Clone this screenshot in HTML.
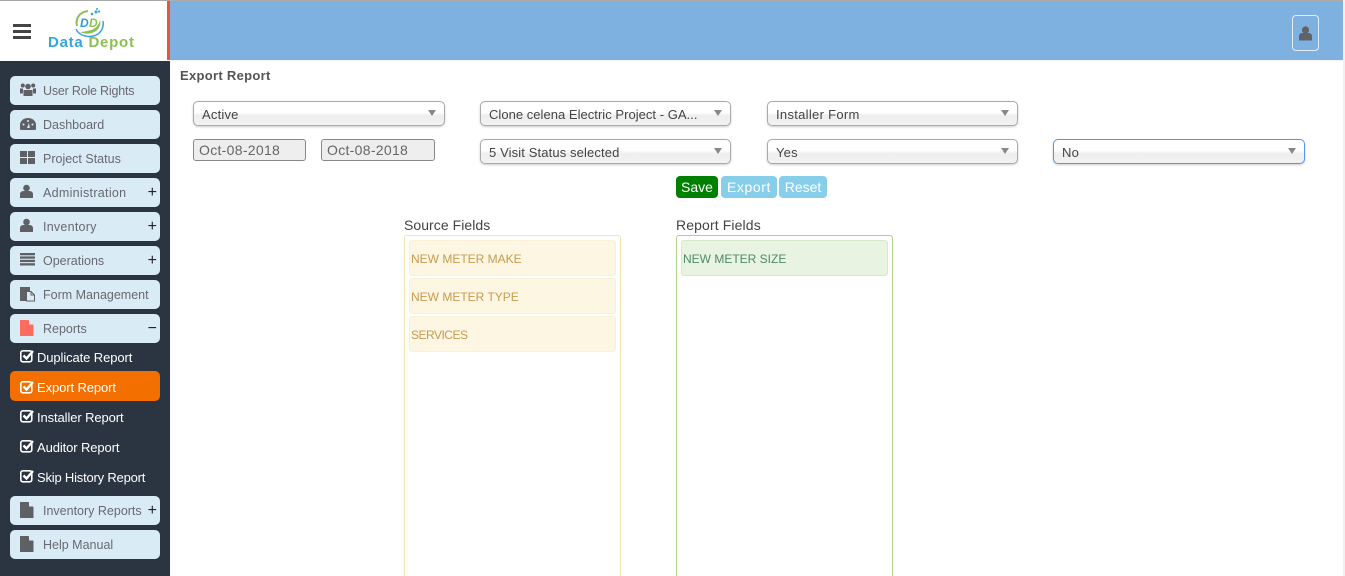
<!DOCTYPE html>
<html><head><meta charset="utf-8"><style>
*{box-sizing:border-box}
html,body{margin:0;padding:0;width:1345px;height:576px;overflow:hidden;background:#fff;font-family:"Liberation Sans",sans-serif;color:#555}
#w{position:absolute;left:0;top:0;width:1345px;height:576px;overflow:hidden}
.a{position:absolute}
.t{position:absolute;white-space:nowrap}
.nav{position:absolute;left:10px;width:150px;height:29px;background:#d9ecf6;border-radius:5px;color:#68686f;font-size:12.5px;line-height:31px;padding-left:33px;white-space:nowrap}
.nav svg{position:absolute;left:10px;top:6px}
.nav b{position:absolute;right:3px;top:-1px;font-weight:400;color:#222;font-size:16px}
.sub{position:absolute;left:10px;width:150px;height:30px;color:#fff;font-size:13px;line-height:30px;padding-left:27px;border-radius:5px;letter-spacing:-.1px;white-space:nowrap}
.sub svg{position:absolute;left:10px;top:6px}
.sel{position:absolute;height:25px;border:1px solid #aaa;border-radius:5px;background:linear-gradient(#fff 0,#fff 45%,#eee 60%,#f2f2f2 100%);box-shadow:0 1px 2px rgba(0,0,0,.2);font-size:13px;line-height:25px;padding-left:8px;color:#444;letter-spacing:.2px;white-space:nowrap}
.sel i{position:absolute;right:8px;top:8px;width:0;height:0;border-left:4px solid transparent;border-right:4px solid transparent;border-top:6px solid #888}
.date{position:absolute;top:139px;height:22px;border:1px solid #888;border-radius:3px;background:#eee;font-size:14px;line-height:21px;padding-left:5px;color:#666;letter-spacing:.3px}
.btn{position:absolute;top:176px;height:22px;border-radius:4px;color:#fff;font-size:14px;line-height:22px;text-align:center;background:#87ceeb}
.it{position:absolute;height:36px;border-radius:3px;font-size:12px;line-height:36px;padding-left:1px;white-space:nowrap}
.y{left:409px;width:207px;background:#fcf6e3;border:1px solid #faf0d6;color:#c79b50}
</style></head><body><div id="w">
<div class="a" style="left:0;top:0;width:1345px;height:1px;background:#aaa"></div>
<div class="a" style="left:168px;top:1px;width:1175px;height:59px;background:#7eb0e0"></div>
<div class="a" style="left:167px;top:1px;width:3px;height:59px;background:#e8553a"></div>
<div class="a" style="left:1343px;top:0;width:2px;height:576px;background:#f1f1f1"></div>
<div class="a" style="left:170px;top:60px;width:1173px;height:1px;background:#f3f3f8"></div>

<!-- hamburger -->
<div class="a" style="left:13px;top:24px;width:18px;height:3px;background:#444"></div>
<div class="a" style="left:13px;top:30px;width:18px;height:3px;background:#444"></div>
<div class="a" style="left:13px;top:36px;width:18px;height:3px;background:#444"></div>
<!-- logo -->
<svg class="a" style="left:70px;top:5px" width="40" height="36" viewBox="0 0 40 36">
<path d="M7 21C5 13 10 7 18 6" fill="none" stroke="#8cc152" stroke-width="2"/>
<path d="M6 24c3 7 14 10 22 5 4-3 6-8 5-13" fill="none" stroke="#35a5dc" stroke-width="1.500"/>
<path d="M10 27c6 3 14 2 18-3 2-3 3-6 2-9-1 5-5 9-9 10-4 1-8 2-11 2z" fill="#8cc152"/>
<text x="10" y="22" font-family="Liberation Sans,sans-serif" font-size="12" font-weight="700" font-style="italic" fill="#2b9fd8">D</text>
<text x="19" y="22" font-family="Liberation Sans,sans-serif" font-size="12" font-weight="700" font-style="italic" fill="#8cc152">D</text>
<circle cx="22" cy="9" r="1.300" fill="#35a5dc"/><circle cx="26" cy="7" r="1.500" fill="#35a5dc"/><circle cx="29" cy="6.500" r="1.100" fill="#35a5dc"/><circle cx="27" cy="4" r="1" fill="#35a5dc"/>
</svg>
<div class="t" style="left:48px;top:35px;font-size:15px;font-weight:700;letter-spacing:.75px;line-height:16px;color:#35a5dc">Data <span style="color:#8cc152">Depot</span></div>

<!-- user button -->
<div class="a" style="left:1292px;top:15px;width:27px;height:36px;border:1px solid #e4eefa;border-radius:4px"></div>
<svg class="a" style="left:1299px;top:26px" width="13" height="15" viewBox="0 0 13 15"><circle cx="6.500" cy="4" r="3.600" fill="#5f6368"/><path d="M0 14.500V10c0-2 2-3 3.500-3h6C11 7 13 8 13 10v4.500z" fill="#5f6368"/></svg>

<!-- sidebar -->
<div class="a" style="left:0;top:61px;width:170px;height:515px;background:#2b3542"></div>

<div class="nav" style="top:76px;letter-spacing:-.2px"><svg width="16" height="16" viewBox="0 0 16 16" fill="#5f6066"><circle cx="8" cy="4.500" r="2.800"/><circle cx="2.800" cy="3.500" r="2"/><circle cx="13.200" cy="3.500" r="2"/><path d="M3.500 8h9v6h-9z"/><path d="M0 6.500h3v5H0zM13 6.500h3v5h-3z"/></svg>User Role Rights</div>
<div class="nav" style="top:110px"><svg width="16" height="16" viewBox="0 0 16 16"><path d="M0 13V9a8 7 0 0 1 16 0v4a1 1 0 0 1-1 1H1a1 1 0 0 1-1-1z" fill="#5f6066"/><circle cx="8" cy="5" r="1" fill="#d9ecf6"/><circle cx="3.500" cy="8.500" r="1" fill="#d9ecf6"/><circle cx="12.500" cy="8.500" r="1" fill="#d9ecf6"/><path d="M7 12l2-5 .8 5z" fill="#d9ecf6"/></svg>Dashboard</div>
<div class="nav" style="top:144px"><svg width="16" height="16" viewBox="0 0 16 16" fill="#5f6066"><rect x="0" y="1" width="7" height="6"/><rect x="8" y="1" width="7" height="6"/><rect x="0" y="8" width="7" height="6"/><rect x="8" y="8" width="7" height="6"/></svg>Project Status</div>
<div class="nav" style="top:178px;letter-spacing:.3px"><svg width="13" height="15" viewBox="0 0 13 15" fill="#5f6066"><circle cx="6.500" cy="4" r="3.300"/><path d="M0 14V10c0-2 2-3 3.500-3h6C11 7 13 8 13 10v4z"/></svg>Administration<b style="letter-spacing:0">+</b></div>
<div class="nav" style="top:212px;letter-spacing:.25px"><svg width="13" height="15" viewBox="0 0 13 15" fill="#5f6066"><circle cx="6.500" cy="4" r="3.300"/><path d="M0 14V10c0-2 2-3 3.500-3h6C11 7 13 8 13 10v4z"/></svg>Inventory<b style="letter-spacing:0">+</b></div>
<div class="nav" style="top:246px"><svg width="16" height="16" viewBox="0 0 16 16" fill="#5f6066"><rect x="0" y="1" width="15" height="2.300"/><rect x="0" y="4.400" width="15" height="2.300"/><rect x="0" y="7.800" width="15" height="2.300"/><rect x="0" y="11.200" width="15" height="2.300"/></svg>Operations<b>+</b></div>
<div class="nav" style="top:280px"><svg width="16" height="16" viewBox="0 0 16 16"><path d="M0 1h10v4H6v10H0z" fill="#5f6066"/><path d="M6.500 5.500H11l3.500 3.500v6H6.500z" fill="#d9ecf6" stroke="#5f6066" stroke-width="1"/><path d="M11 5.500V9h3.500" fill="none" stroke="#5f6066"/></svg>Form Management</div>
<div class="nav" style="top:314px"><svg width="14" height="16" viewBox="0 0 14 16"><path d="M0 0h8.500L13.500 5v11H0z" fill="#ff6b60"/><path d="M9 0v4.500h4.500z" fill="#d9ecf6"/></svg>Reports<b>−</b></div>

<svg width="0" height="0" style="position:absolute"><defs><symbol id="c" viewBox="0 0 14 14"><rect x=".8" y="1.800" width="11" height="11" rx="2" fill="none" stroke="#fff" stroke-width="1.600"/><path d="M3.500 6.500l3 3 6.500-7.500" fill="none" stroke="#fff" stroke-width="2.400"/></symbol></defs></svg>
<div class="sub" style="top:343px"><svg width="14" height="14"><use href="#c"/></svg>Duplicate Report</div>
<div class="sub" style="top:371px;height:30px;line-height:33px;background:#f36f00"><svg style="top:9px" width="14" height="14"><use href="#c"/></svg>Export Report</div>
<div class="sub" style="top:403px"><svg width="14" height="14"><use href="#c"/></svg>Installer Report</div>
<div class="sub" style="top:433px"><svg width="14" height="14"><use href="#c"/></svg>Auditor Report</div>
<div class="sub" style="top:463px;letter-spacing:-.2px"><svg width="14" height="14"><use href="#c"/></svg>Skip History Report</div>

<div class="nav" style="top:496px"><svg width="14" height="16" viewBox="0 0 14 16"><path d="M0 0h8.500L13.500 5v11H0z" fill="#5f6066"/><path d="M9 0v4.500h4.500z" fill="#d9ecf6"/></svg>Inventory Reports<b>+</b></div>
<div class="nav" style="top:530px"><svg width="14" height="16" viewBox="0 0 14 16"><path d="M0 0h8.500L13.500 5v11H0z" fill="#5f6066"/><path d="M9 0v4.500h4.500z" fill="#d9ecf6"/></svg>Help Manual</div>

<!-- main -->
<div class="t" style="left:180px;top:68px;font-size:13px;font-weight:700;line-height:15px;color:#555;letter-spacing:.3px">Export Report</div>

<div class="sel" style="left:193px;top:101px;width:252px">Active<i></i></div>
<div class="sel" style="left:480px;top:101px;width:251px;letter-spacing:.03px">Clone celena Electric Project - GA...<i></i></div>
<div class="sel" style="left:767px;top:101px;width:251px;letter-spacing:.3px">Installer Form<i></i></div>
<div class="date" style="left:193px;width:113px">Oct-08-2018</div>
<div class="date" style="left:321px;width:114px">Oct-08-2018</div>
<div class="sel" style="left:480px;top:139px;width:251px;letter-spacing:.12px">5 Visit Status selected<i></i></div>
<div class="sel" style="left:767px;top:139px;width:251px">Yes<i></i></div>
<div class="sel" style="left:1053px;top:139px;width:252px;border-color:#5b93ea">No<i></i></div>

<div class="btn" style="left:676px;width:42px;background:#008000">Save</div>
<div class="btn" style="left:721px;width:56px;letter-spacing:.6px">Export</div>
<div class="btn" style="left:779px;width:48px">Reset</div>

<div class="t" style="left:404px;top:217px;font-size:14px;line-height:16px;color:#444;letter-spacing:.05px">Source Fields</div>
<div class="t" style="left:676px;top:217px;font-size:14px;line-height:16px;color:#444;letter-spacing:.12px">Report Fields</div>
<div class="a" style="left:404px;top:235px;width:217px;height:341px;border:1px solid #f5e3b0;border-bottom:0;border-radius:3px 3px 0 0"></div>
<div class="a" style="left:676px;top:235px;width:217px;height:341px;border:1px solid #aed486;border-bottom:0;border-radius:3px 3px 0 0"></div>
<div class="it y" style="top:240px">NEW METER MAKE</div>
<div class="it y" style="top:278px">NEW METER TYPE</div>
<div class="it y" style="top:316px;letter-spacing:-.5px">SERVICES</div>
<div class="it" style="left:681px;top:240px;width:207px;background:#e8f3e2;border:1px solid #d6e9c6;color:#4f8a6a">NEW METER SIZE</div>
</div></body></html>
